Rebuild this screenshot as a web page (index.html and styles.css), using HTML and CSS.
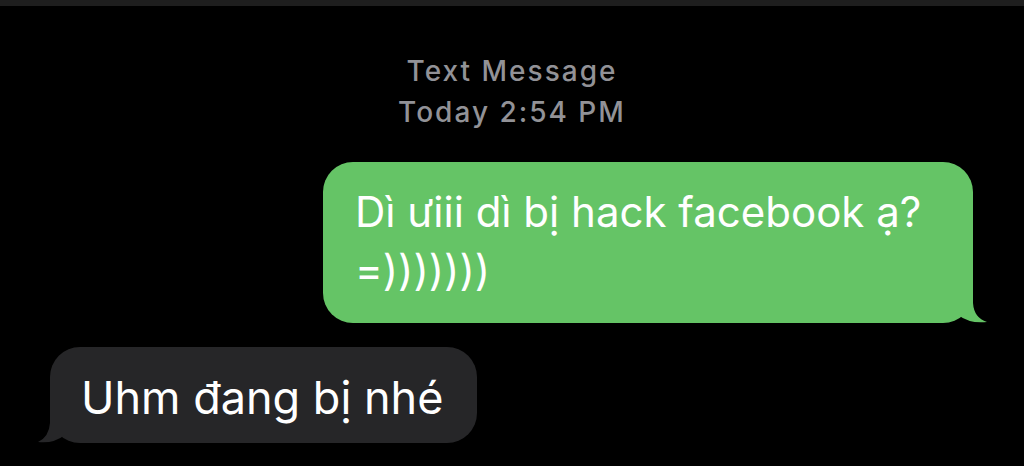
FILE: index.html
```html
<!DOCTYPE html>
<html lang="vi">
<head>
    <meta charset="UTF-8">
    <meta name="viewport" content="width=device-width, initial-scale=1.0">
    <title>Text Message</title>
    <link rel="stylesheet" href="styles.css">
</head>
<body>
    <div class="top-strip"></div>

    <div class="thread">
        <!-- Header -->
        <div class="thread-header">
            <div class="service">Text Message</div>
            <div class="timestamp"><b>Today</b> 2:54 PM</div>
        </div>

        <!-- Sent -->
        <div class="row row-sent">
            <div class="bubble bubble-sent">
                Dì ưiii dì bị hack facebook ạ?<br>=)))))))
                <svg class="tail tail-sent" width="30" height="37" viewBox="0 0 30 37">
                    <path d="M15 2 L15 17 Q16 32 29 36 Q12 38 0 29 L0 2 Z" fill="#65c466"/>
                </svg>
            </div>
        </div>

        <!-- Received -->
        <div class="row row-received">
            <div class="bubble bubble-received">
                Uhm đang bị nhé
                <svg class="tail tail-received" width="30" height="37" viewBox="0 0 30 37">
                    <path d="M12 2 L12 17 Q11 31 0 36 Q15 38 27 29 L27 2 Z" fill="#262628"/>
                </svg>
            </div>
        </div>
    </div>
</body>
</html>
```

FILE: styles.css
```css
* {
    box-sizing: border-box;
}

body {
    margin: 0;
    background-color: #000;
    font-family: Inter, "Noto Sans", sans-serif;
    overflow: hidden;
}

.top-strip {
    height: 6px;
    background-color: #1e1e1e;
}

.thread {
    display: flex;
    flex-direction: column;
}

/* Header */
.thread-header {
    margin-top: 45px;
    text-align: center;
    color: #929297;
    font-size: 28px;
    font-weight: 500;
    letter-spacing: 2px;
    line-height: 41px;
}

.timestamp b {
    font-weight: 500;
}

/* Bubbles */
.row {
    display: flex;
}

.row-sent {
    justify-content: flex-end;
    padding-right: 51px;
    margin-top: 29px;
}

.row-received {
    padding-left: 50px;
    margin-top: 24px;
}

.bubble {
    position: relative;
    color: #fff;
    border-radius: 30px;
}

.bubble-sent {
    width: 650px;
    background-color: #65c466;
    font-size: 42px;
    line-height: 58px;
    padding: 21px 20px 24px 32px;
}

.bubble-received {
    width: 427px;
    background-color: #262628;
    font-size: 45px;
    line-height: 58px;
    padding: 22px 20px 16px 31px;
}

.tail {
    position: absolute;
    bottom: 0;
}

.tail-sent {
    right: -15px;
}

.tail-received {
    left: -12px;
}
```
